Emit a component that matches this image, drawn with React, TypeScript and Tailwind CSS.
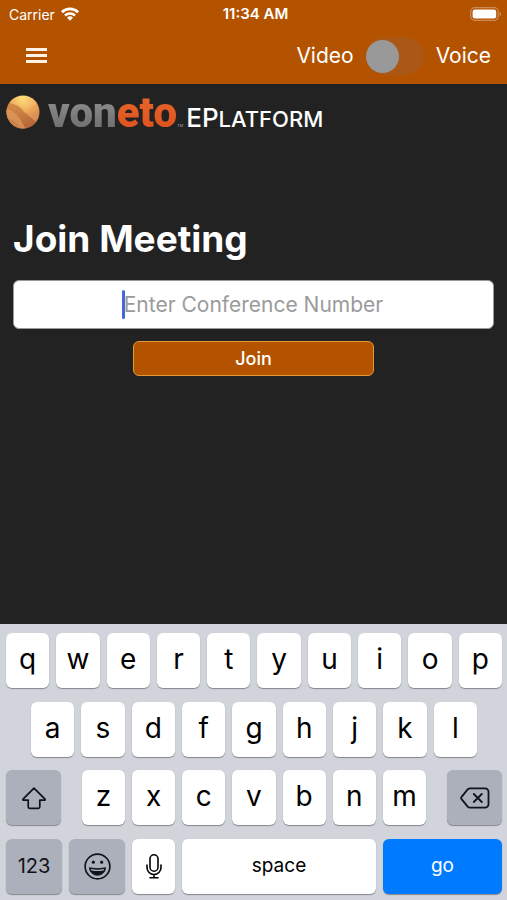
import type { ReactNode } from "react";

type Tone = "light" | "dark" | "blue";

const tones: Record<Tone, string> = {
  light: "bg-white text-black",
  dark: "bg-[#abb0bb] text-[#111318]",
  blue: "bg-[#007aff] text-white",
};

function Key({
  label,
  children,
  tone = "light",
  className = "flex-1 pb-[3px] text-[28px]",
}: {
  label?: string;
  children: ReactNode;
  tone?: Tone;
  className?: string;
}) {
  return (
    <button
      type="button"
      aria-label={label}
      className={`flex h-[55px] min-w-0 items-center justify-center rounded-[6px] shadow-[0_1px_1px_#85878c] ${tones[tone]} ${className}`}
    >
      {children}
    </button>
  );
}

function Letters({ keys }: { keys: string }) {
  return (
    <>
      {keys.split("").map((k) => (
        <Key key={k}>{k}</Key>
      ))}
    </>
  );
}

function WifiIcon() {
  return (
    <svg className="h-[14px] w-[18px]" viewBox="0 0 18 14" fill="none" stroke="white" strokeWidth="2.6" aria-hidden="true">
      <path d="M0.9 5.2a11.6 11.6 0 0 1 16.2 0" />
      <path d="M4 8.5a7.2 7.2 0 0 1 10 0" />
      <path d="M9 13.8 6 10.8a4.3 4.3 0 0 1 6 0z" fill="white" stroke="none" />
    </svg>
  );
}

function BatteryIcon() {
  return (
    <svg className="h-[14px] w-[32px]" viewBox="0 0 32 14" aria-hidden="true">
      <rect x="0.7" y="0.7" width="27.6" height="12.6" rx="4" fill="none" stroke="#d08a58" strokeWidth="1.2" />
      <rect x="2.6" y="2.4" width="23.6" height="9.2" rx="2.4" fill="white" />
      <path d="M29.6 4.6c1.9.8 1.9 4 0 4.8z" fill="#d08a58" />
    </svg>
  );
}

function Globe() {
  return (
    <svg className="size-[34px] shrink-0" viewBox="0 0 34 34" aria-hidden="true">
      <defs>
        <radialGradient id="globe" cx="0.5" cy="0.08" r="0.95">
          <stop offset="0" stopColor="#ffe27c" />
          <stop offset="0.45" stopColor="#eea65a" />
          <stop offset="1" stopColor="#bd7046" />
        </radialGradient>
        <linearGradient id="band" x1="0" y1="0" x2="1" y2="1">
          <stop offset="0" stopColor="#c9813f" />
          <stop offset="1" stopColor="#a85430" />
        </linearGradient>
        <clipPath id="disc">
          <circle cx="17" cy="17" r="16.5" />
        </clipPath>
      </defs>
      <g clipPath="url(#disc)">
        <rect width="34" height="34" fill="url(#globe)" />
        <path d="M3 8c7 1 12 4 15 9l13 10-8 7H0V14z" fill="url(#band)" opacity="0.7" />
        <path d="M0 14c6 1 11 5 14 10l6 10H0z" fill="#e09a5e" opacity="0.75" />
        <path d="M0 23c6 1 11 4 15 11H0z" fill="#c4743f" opacity="0.5" />
        <path d="M18 17l16 3v6l-3 2z" fill="#e0935a" opacity="0.5" />
        <path d="M20 0l-2 17 16-11z" fill="#ffc878" opacity="0.2" />
      </g>
    </svg>
  );
}

export default function App() {
  return (
    <div className="flex min-h-screen flex-col bg-[#222222] font-['Inter','Liberation_Sans',sans-serif] text-white">
      <header className="bg-[#b35300]">
        <div className="grid h-7 grid-cols-3 items-center pr-[5px] pl-[9px] text-[14px]">
          <div className="flex items-center gap-[6px]">
            <span>Carrier</span>
            <WifiIcon />
          </div>
          <span className="text-center text-[15px] font-semibold">11:34 AM</span>
          <div className="flex justify-end">
            <BatteryIcon />
          </div>
        </div>
        <div className="flex h-14 items-center justify-between pr-4 pl-[26px]">
          <button type="button" aria-label="Menu" className="flex flex-col gap-[3px] pb-[2px]">
            <span className="h-[3px] w-[21px] bg-[#fff1e4]" />
            <span className="h-[3px] w-[21px] bg-[#fff1e4]" />
            <span className="h-[3px] w-[21px] bg-[#fff1e4]" />
          </button>
          <div className="flex items-center gap-3 text-[21px]">
            <span>Video</span>
            <label className="flex h-[38px] w-[58px] items-center rounded-full bg-[#ab5715]">
              <input type="checkbox" role="switch" aria-label="Voice call" className="size-[33px] appearance-none rounded-full bg-[#999999]" />
            </label>
            <span>Voice</span>
          </div>
        </div>
      </header>

      <main className="flex-1">
        <div className="flex h-14 items-center pl-[6px]">
          <Globe />
          <div className="flex items-baseline pt-2 pl-2">
            <span className="bg-linear-to-b from-[#999999] to-[#666666] bg-clip-text font-['Roboto',sans-serif] text-[42px] leading-[48px] font-black text-transparent">
              von
            </span>
            <span className="bg-linear-to-b from-[#ea6a2c] to-[#dc4d1c] bg-clip-text font-['Roboto',sans-serif] text-[42px] leading-[48px] font-black text-transparent">
              eto
            </span>
            <span className="text-[4px] text-[#aaaaaa]">TM</span>
            <span className="pl-[3px] text-[26px] leading-[48px] font-medium">
              EP<span className="text-[22px]">LATFORM</span>
            </span>
          </div>
        </div>

        <form className="flex flex-col items-center px-[13px] pt-[75px]">
          <h1 className="w-full text-[37px] leading-[48px] font-bold">Join Meeting</h1>
          <div className="relative mt-[17px] w-full">
            <input
              type="text"
              aria-label="Conference number"
              placeholder="Enter Conference Number"
              className="h-[49px] w-full rounded-[6px] border border-[#999999] bg-white text-center text-[21px] text-black outline-none placeholder:text-[#9b9b9b]"
            />
            <span className="absolute top-[10px] left-[calc(50%-132px)] h-[29px] w-[3px] rounded-full bg-[#4169dc]" />
          </div>
          <button type="button" className="mt-3 h-[35px] w-1/2 rounded-[6px] border border-[#e39a35] bg-[#b35300] text-[18px] font-medium">
            Join
          </button>
        </form>
      </main>

      <section aria-label="Keyboard" className="flex h-[276px] flex-col justify-between bg-[#d1d4db] pt-[9px] pr-[5px] pb-[6px] pl-[6px]">
        <div className="flex gap-[7px]">
          <Letters keys="qwertyuiop" />
        </div>
        <div className="flex gap-[7px] px-[25px]">
          <Letters keys="asdfghjkl" />
        </div>
        <div className="flex justify-between gap-[21px]">
          <Key label="Shift" tone="dark" className="w-[55px] shrink-0">
            <svg className="size-[26px]" viewBox="0 0 26 26" fill="none" stroke="currentColor" strokeWidth="1.7" strokeLinejoin="round" aria-hidden="true">
              <path d="M13 3.2 24 14.2c.4.5.2.9-.4.9h-4.8v6.7c0 1-.5 1.5-1.5 1.5H8.7c-1 0-1.5-.5-1.5-1.5v-6.7H2.4c-.6 0-.8-.4-.4-.9z" />
            </svg>
          </Key>
          <div className="flex flex-1 gap-[7px]">
            <Letters keys="zxcvbnm" />
          </div>
          <Key label="Delete" tone="dark" className="w-[55px] shrink-0">
            <svg className="h-[22px] w-[30px]" viewBox="0 0 30 22" fill="none" stroke="currentColor" strokeWidth="1.8" strokeLinecap="round" strokeLinejoin="round" aria-hidden="true">
              <path d="M10.2 1.3H25a3.5 3.5 0 0 1 3.5 3.5v12.4a3.5 3.5 0 0 1-3.5 3.5H10.2c-1 0-1.8-.4-2.5-1.1L1.8 12.4c-.9-.9-.9-1.9 0-2.8l5.900-7.2c.7-.7 1.5-1.1 2.5-1.1z" />
              <path d="m13.8 7 8 8m0-8-8 8" />
            </svg>
          </Key>
        </div>
        <div className="flex gap-[7px]">
          <Key tone="dark" className="w-[56px] text-[20px]">
            123
          </Key>
          <Key label="Emoji" tone="dark" className="w-[56px]">
            <svg className="size-[27px]" viewBox="0 0 26 26" fill="none" stroke="currentColor" strokeWidth="1.6" aria-hidden="true">
              <circle cx="13" cy="13" r="11.9" />
              <circle cx="9" cy="8.8" r="1.5" fill="currentColor" stroke="none" />
              <circle cx="17" cy="8.8" r="1.5" fill="currentColor" stroke="none" />
              <path d="M5.2 14.2c5 1 10.6 1 15.6 0-.5 4.6-3.7 7.2-7.8 7.2s-7.3-2.6-7.8-7.2z" fill="currentColor" strokeWidth="0.8" />
              <path d="M6.6 15.5c4.2.8 8.6.8 12.8 0l-.5 1.3c-3.8.7-8 .7-11.8 0z" fill="#abb0bb" stroke="none" />
            </svg>
          </Key>
          <Key label="Dictate" className="w-[43px]">
            <svg className="h-[26px] w-[18px]" viewBox="0 0 18 26" fill="none" stroke="currentColor" strokeWidth="1.6" strokeLinecap="round" aria-hidden="true">
              <rect x="5" y="1.8" width="8" height="16.4" rx="4" />
              <path d="M2 12v2.6a7 7 0 0 0 14 0V12M9 21.6v3.2M5 24.8h8" />
            </svg>
          </Key>
          <Key className="flex-1 pb-[1px] text-[19px]">space</Key>
          <Key tone="blue" className="w-[119px] pb-[1px] text-[19px]">
            go
          </Key>
        </div>
      </section>
    </div>
  );
}
